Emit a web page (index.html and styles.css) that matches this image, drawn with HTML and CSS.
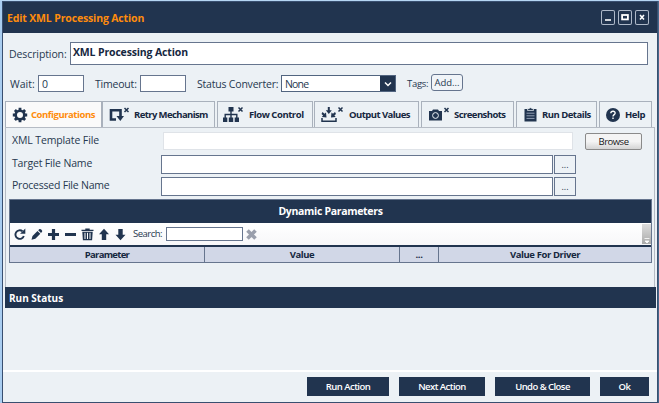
FILE: index.html
```html
<!DOCTYPE html>
<html lang="en">
<head>
<meta charset="utf-8">
<title>Edit XML Processing Action</title>
<link rel="stylesheet" href="styles.css">
</head>
<body>
<main class="window">
  <header class="titlebar">
    <h1>Edit XML Processing Action</h1>
    <div class="controls">
      <button aria-label="Minimize"><svg width="14" height="15" viewBox="0 0 14 15"><path d="M4 10h6" stroke="#fff" stroke-width="1.6"/></svg></button>
      <button aria-label="Maximize"><svg width="14" height="15" viewBox="0 0 14 15"><rect x="4.1" y="5" width="5.8" height="4.4" fill="none" stroke="#fff" stroke-width="1.8"/></svg></button>
      <button aria-label="Close"><svg width="14" height="15" viewBox="0 0 14 15"><path d="M5 5l4 4.500M9 5l-4 4.500" stroke="#fff" stroke-width="1.6"/></svg></button>
    </div>
  </header>
  <section class="desc"><label>Description:</label><div class="box descbox">XML Processing Action</div></section>
  <section class="options">
    <label class="l-wait">Wait:</label><div class="box small">0</div>
    <label class="l-time">Timeout:</label><div class="box small"></div>
    <label class="l-status">Status Converter:</label>
    <div class="combo"><span>None</span><i><svg width="15" height="16" viewBox="0 0 15 16"><path d="M5 6.500l3 3 3-3" fill="none" stroke="#fff" stroke-width="1.5"/></svg></i></div>
    <label class="l-tags">Tags:</label><button class="add">Add...</button>
  </section>
  <nav class="tabs">
    <div class="tab t1 active"><svg width="16" height="16" viewBox="0 0 16 16"><circle cx="8" cy="8" r="4.300" fill="none" stroke="#21344f" stroke-width="2.600"/><path d="M8 .8v2.800M8 12.400v2.800M.8 8h2.800M12.400 8h2.800M2.900 2.900l2 2M11.100 11.100l2 2M13.100 2.900l-2 2M4.900 11.100l-2 2" stroke="#21344f" stroke-width="2.800"/></svg><span>Configurations</span></div>
    <div class="tab t2"><svg width="21" height="16" viewBox="0 0 21 16"><path d="M7 12.500H2V3.300h9.500V9" fill="none" stroke="#21344f" stroke-width="2.600"/><path d="M7.500 9H15l-3.700 5z" fill="#21344f"/><path d="M15.500 1l4 4M19.500 1l-4 4" stroke="#21344f" stroke-width="1.500"/></svg><span>Retry Mechanism</span></div>
    <div class="tab t3"><svg width="21" height="17" viewBox="0 0 21 17"><path d="M5.500 1h5v4.500h-5zM0 11.500h4.300V16H0zM5.800 11.500h4.400V16H5.800zM11.700 11.500H16V16h-4.300z" fill="#21344f"/><path d="M8 5v7M2.200 12V8.500h11.600V12" fill="none" stroke="#21344f" stroke-width="1.400"/><path d="M15.500 1.500l4 4M19.500 1.500l-4 4" stroke="#21344f" stroke-width="1.500"/></svg><span>Flow Control</span></div>
    <div class="tab t4"><svg width="23" height="17" viewBox="0 0 23 17"><path d="M6.800 1h2v3.300h2L7.800 8l-3-3.700h2zM1.500 6l2 1.700L5 6.500l.5 5-4.700-.5 1.300-1.600L.5 8zM14 6l-2 1.700-1.500-1.200-.5 5 4.700-.5-1.300-1.600L15 8z" fill="#21344f"/><path d="M1 12v3.300h14V12" fill="none" stroke="#21344f" stroke-width="1.500"/><path d="M17.500 1.500l4 4M21.500 1.500l-4 4" stroke="#21344f" stroke-width="1.500"/></svg><span>Output Values</span></div>
    <div class="tab t5"><svg width="21" height="16" viewBox="0 0 21 16"><path d="M0 4h3l1-1.500h5L10 4h3v9.500H0z" fill="#21344f"/><circle cx="6.500" cy="8.500" r="2.900" fill="none" stroke="#edf2f6"/><path d="M15.500 1l4 4M19.500 1l-4 4" stroke="#21344f" stroke-width="1.500"/></svg><span>Screenshots</span></div>
    <div class="tab t6"><svg width="13" height="16" viewBox="0 0 13 16"><path d="M.5 2h12v12.500H.5z" fill="#21344f"/><path d="M3.500 3.500V1.700h1.600a1.500 1.500 0 0 1 2.800 0h1.600v1.800z" fill="#21344f" stroke="#edf2f6" stroke-width=".7"/><path d="M2.500 6.200h8M2.500 8.800h8M2.500 11.400h8" stroke="#9daabd" stroke-width=".9"/></svg><span>Run Details</span></div>
    <div class="tab t7"><svg width="14" height="14" viewBox="0 0 14 14"><circle cx="7" cy="7" r="7" fill="#21344f"/><path d="M4.800 5.300C5 2.500 9.400 2.800 9.100 5.300 9 6.700 7 6.700 7 8.500M7 9.600v1.500" fill="none" stroke="#fff" stroke-width="1.400"/></svg><span>Help</span></div>
  </nav>
  <section class="panel">
    <div class="row r1"><label>XML Template File</label><div class="filebox"></div><button class="browse">Browse</button></div>
    <div class="row r2"><label>Target File Name</label><div class="box path"></div><button class="dots">...</button></div>
    <div class="row r3"><label>Processed File Name</label><div class="box path"></div><button class="dots">...</button></div>
    <div class="grid">
      <h2>Dynamic Parameters</h2>
      <div class="toolbar">
        <svg width="120" height="22" viewBox="0 0 120 22" class="tools">
          <path d="M12.500 8.300A4.300 4.300 0 1 0 13.800 13" fill="none" stroke="#21344f" stroke-width="1.900"/><path d="M15.300 5.500v5.200h-5.200z" fill="#21344f"/>
          <path d="M21.500 16.800l1-3.800 5-5 2.800 2.800-5 5zM28.200 7.300l1.300-1.300 1.500.3 1.200 1.400-.1 1-1.100 1.200z" fill="#21344f"/>
          <path d="M43.500 6v11M38 11.500h11M55 11.500h11" stroke="#21344f" stroke-width="3.200"/>
          <path d="M71.500 8V6.800h3.800V5.500h4.400v1.300h3.800V8zM72.300 8.800h10.400l-.6 8.400h-9.200z" fill="#21344f"/><path d="M75 9.800v6.200M77.500 9.800v6.200M80 9.800v6.200" stroke="#fff" stroke-width="1"/>
          <path d="M94 5.800l5 5.400h-2.800V17h-4.400v-5.800H89zM110.500 17.200l5-5.400h-2.800V6h-4.400v5.800h-2.800z" fill="#21344f"/>
        </svg>
        <label>Search:</label><div class="box search"></div>
        <svg width="11" height="11" viewBox="0 0 11 11" class="clear"><path d="M1.500 1.500l8 8M9.500 1.500l-8 8" stroke="#9a9fac" stroke-width="3.600"/></svg>
        <i class="overflow"><svg width="9" height="20" viewBox="0 0 9 20"><path d="M2.500 14.500h5M3 17h4l-2 2z" stroke="#fff" stroke-width=".8" fill="#fff"/></svg></i>
      </div>
      <div class="cols"><span>Parameter</span><span>Value</span><span>...</span><span>Value For Driver</span></div>
    </div>
  </section>
  <h3>Run Status</h3>
  <section class="status"></section>
  <footer><button class="b1">Run Action</button><button class="b2">Next Action</button><button class="b3">Undo &amp; Close</button><button class="b4">Ok</button></footer>
</main>
</body>
</html>
```
FILE: styles.css
```css
* { box-sizing: border-box; }
body { margin: 0; width: 659px; height: 403px; overflow: hidden; padding: 1px 1px 0 2px; background: linear-gradient(#b5d5f3 1px, transparent 1px), linear-gradient(90deg, #a9cdf0 50%, #46698a 50%); font: 10.5px/14px "Open Sans", "Noto Sans", sans-serif; color: #26384f; }
h1, h2, h3 { margin: 0; font-weight: 700; }
button { font: inherit; color: inherit; padding: 0; margin: 0; }
label, span, button { white-space: nowrap; }
svg { display: block; flex: none; }
.window { width: 656px; height: 402px; border: 1px solid #394f70; background: #ecf1f5; overflow: hidden; }
.titlebar { height: 31px; background: #21344f; display: flex; align-items: center; justify-content: space-between; padding: 0 8px 0 4px; }
h1 { color: #ff8c0c; font-size: 10.5px; letter-spacing: -.15px; }
.controls { display: flex; gap: 3px; }
.controls button { width: 14px; height: 15px; border: 0; background: none; box-shadow: inset 0 0 0 1px #aeb9c9; border-radius: 2px; }
.box { background: #fff; border: 1px solid #66758e; flex: none; }
.desc { height: 42px; padding: 9px 0 0 6px; display: flex; }
.desc label { width: 61px; padding-top: 5px; letter-spacing: -.1px; }
.descbox { width: 578px; height: 23px; font-weight: 700; padding: 2px 2px; letter-spacing: -.15px; color: #162740; }
.options { height: 26px; display: flex; align-items: flex-start; padding-left: 7px; line-height: 18px; }
.small { width: 46px; height: 17px; padding-left: 3px; line-height: 16px; }
.l-wait { width: 28px; }
.l-time { width: 45px; margin-left: 11px; letter-spacing: -.2px; }
.l-status { width: 84px; margin-left: 11px; letter-spacing: -.2px; }
.combo { width: 115px; height: 17px; border: 1px solid #526580; background: #fff; display: flex; justify-content: space-between; line-height: 16px; padding-left: 3px; letter-spacing: -.8px; }
.combo i { width: 15px; background: #21344f; }
.l-tags { font-size: 9.5px; width: 24px; margin-left: 11px; letter-spacing: -.3px; }
.add { width: 32px; height: 17px; margin-top: -1px; border: 1px solid #66758e; border-radius: 3px; background: #f0f4f8; font-size: 9.5px; line-height: 15px; }
.tabs { height: 26px; padding-left: 2px; display: flex; gap: 2px; }
.tab { border: 1px solid #a9b1bc; border-bottom: 0; display: flex; align-items: center; font-weight: 700; font-size: 9.5px; letter-spacing: -.45px; color: #162740; }
.tab span { padding-top: 1px; }
.t1 { width: 97px; padding-left: 6px; gap: 3px; margin-right: -2px; }
.t2 { width: 113px; padding-left: 6px; gap: 4px; letter-spacing: -.6px; }
.t3 { width: 96px; padding-left: 5px; gap: 5px; }
.t4 { width: 105px; padding-left: 6px; gap: 5px; margin-left: -1px; letter-spacing: -.55px; }
.t5 { width: 93px; padding-left: 7px; gap: 4px; letter-spacing: -.55px; }
.t6 { width: 81px; padding-left: 7px; gap: 5px; letter-spacing: -.5px; }
.t7 { width: 53px; padding-left: 6px; gap: 5px; }
.active { background: #fafafa; color: #ff8c0c; }
.panel { height: 160px; margin: 0 2px; border: 1px solid #b5bbc4; border-bottom: 0; padding: 3px 0 0 3px; }
.row { display: flex; align-items: flex-start; padding-left: 3px; }
.row label { width: 149px; line-height: 17px; letter-spacing: -.22px; }
.r1 { height: 24px; padding-top: 1px; }
.r1 label { width: 151px; letter-spacing: -.12px; }
.r2 { height: 22px; }
.r2 label { line-height: 16px; letter-spacing: -.16px; }
.r3 { height: 22px; }
.filebox { width: 410px; height: 18px; background: #fff; border: 1px solid #dfe3e8; }
.browse { margin: 1px 0 0 12px; width: 57px; height: 17px; border: 1px solid #8a8a8a; border-radius: 2px; background: linear-gradient(#f4f4f4 50%, #d4d4d4); color: #161616; font-size: 9.5px; line-height: 15px; letter-spacing: -.5px; }
.path { width: 392px; height: 19px; }
.dots { width: 22px; height: 19px; margin-left: 1px; border: 1px solid #66758e; background: #edf2f6; font-size: 9px; line-height: 14px; }
.grid { width: 643px; border: 1px solid #66758e; }
h2 { height: 23px; background: #21344f; color: #fff; text-align: center; font-size: 10.5px; line-height: 23px; letter-spacing: -.32px; }
.toolbar { height: 24px; background: linear-gradient(#fff, #f7f7f9); display: flex; align-items: center; border-bottom: 2px solid #21344f; }
.tools { width: 120px; }
.toolbar label { font-size: 9.5px; margin-left: 3px; width: 33px; letter-spacing: -.5px; }
.search { width: 77px; height: 14px; }
.clear { margin-left: 3px; }
.overflow { width: 9px; height: 20px; margin-left: auto; background: linear-gradient(#ddd, #aaa); }
.cols { height: 15px; display: grid; grid-template-columns: 194px 195px 39px 1fr; background: #d1d7e7; font-weight: 700; font-size: 9.5px; line-height: 16px; text-align: center; color: #162740; letter-spacing: -.4px; }
.cols span { height: 15px; }
.cols span:first-child { letter-spacing: -.7px; }
.cols span + span { border-left: 1px solid #66758e; }
h3 { margin: 0 1px 0 2px; height: 21px; background: #21344f; color: #fff; padding-left: 4px; font-size: 10px; line-height: 22px; }
.status { height: 64px; border-bottom: 2px solid #fff; }
footer { display: flex; padding: 5px 0 0 304px; gap: 10px; }
footer button { border: 0; background: #21344f; color: #fff; height: 19px; font-size: 9.5px; font-weight: 600; letter-spacing: -.55px; }
.b1 { width: 82px; }
.b2 { width: 86px; }
.b3 { width: 95px; }
.b4 { width: 49px; }
```
